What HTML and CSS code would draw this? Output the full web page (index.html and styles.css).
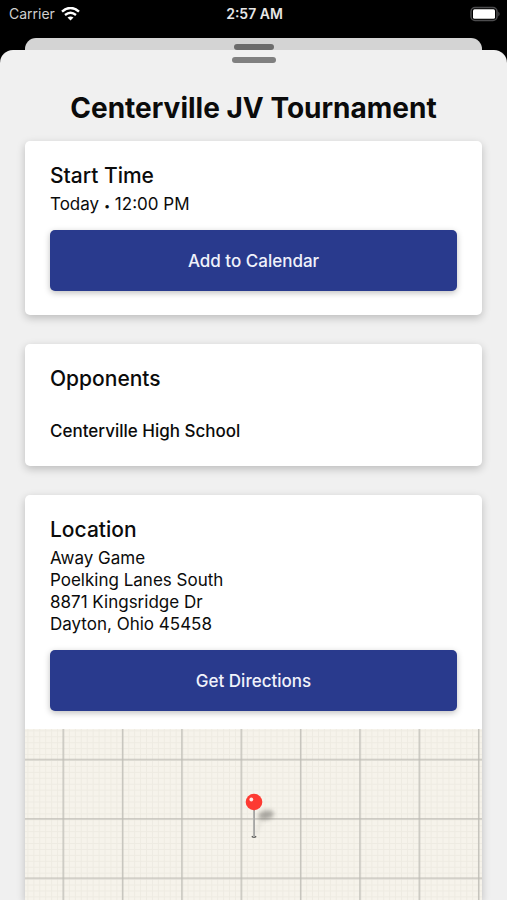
FILE: index.html
```html
<!DOCTYPE html>
<html lang="en">
<head>
<meta charset="utf-8">
<meta name="viewport" content="width=device-width, initial-scale=1">
<title>Centerville JV Tournament</title>
<link rel="stylesheet" href="styles.css">
</head>
<body>
<header class="status">
  <div class="carrier">
    <span>Carrier</span>
    <svg class="wifi" width="19" height="14" viewBox="0 0 19 14" aria-hidden="true">
      <path d="M1 4.600 Q9.500 -2.600 18 4.600" fill="none" stroke="#fff" stroke-width="2.500"/>
      <path d="M4 8 Q9.500 3.400 15 8" fill="none" stroke="#fff" stroke-width="2.300"/>
      <path d="M6.500 10.600 Q9.500 8.200 12.500 10.600 L9.500 13.600 Z" fill="#fff"/>
    </svg>
  </div>
  <time class="clock">2:57 AM</time>
  <svg class="battery" width="31" height="16" viewBox="0 0 31 16" aria-hidden="true">
    <rect x="2" y="1.500" width="26" height="13" rx="4" fill="none" stroke="#4c4c4e" stroke-width="1.500"/>
    <rect x="4" y="3.300" width="22" height="9.400" rx="1.500" fill="#fff"/>
    <path d="M29.300 5.500 Q32 8 29.300 10.500 Z" fill="#4c4c4e"/>
  </svg>
</header>
<div class="back-sheet"><div class="back-handle"></div></div>
<main class="sheet">
  <div class="handle"></div>
  <h1>Centerville JV Tournament</h1>
  <section class="card">
    <h2>Start Time</h2>
    <p>Today <span class="dot">•</span> 12:00 PM</p>
    <button class="action" type="button">Add to Calendar</button>
  </section>
  <section class="card opponents">
    <h2>Opponents</h2>
    <p class="school">Centerville High School</p>
  </section>
  <section class="card location">
    <h2>Location</h2>
    <p>Away Game<br>Poelking Lanes South<br>8871 Kingsridge Dr<br>Dayton, Ohio 45458</p>
    <button class="action" type="button">Get Directions</button>
    <div class="map">
      <svg class="grid" width="100%" height="100%" aria-hidden="true">
        <defs>
          <pattern id="fine" x="38" y="31" width="5.930" height="5.930" patternUnits="userSpaceOnUse">
            <path d="M0 .5H6M.5 0V6" stroke="#eeebe2" stroke-width="1"/>
          </pattern>
          <pattern id="coarse" x="37.500" y="29.700" width="59.350" height="59.350" patternUnits="userSpaceOnUse">
            <path d="M0 .8H60M.8 0V60" stroke="#bebcb5" stroke-width="1.300"/>
          </pattern>
        </defs>
        <rect width="100%" height="100%" fill="#f6f3eb"/>
        <rect width="100%" height="100%" fill="url(#fine)"/>
        <rect width="100%" height="100%" fill="url(#coarse)"/>
      </svg>
      <svg class="pin" width="60" height="56" viewBox="0 0 60 56" role="img" aria-label="Poelking Lanes South">
        <defs>
          <filter id="soft" x="-50%" y="-50%" width="200%" height="200%"><feGaussianBlur stdDeviation="2"/></filter>
          <linearGradient id="needle"><stop offset="0" stop-color="#8d8d8a"/><stop offset=".5" stop-color="#d5d5d2"/><stop offset="1" stop-color="#777"/></linearGradient>
        </defs>
        <ellipse cx="42" cy="26" rx="8" ry="4.500" transform="rotate(-12 42 26)" fill="#77756f" opacity=".6" filter="url(#soft)"/>
        <path d="M31 46L38 30" stroke="#8a8882" stroke-width="1.500" opacity=".3" filter="url(#soft)"/>
        <ellipse cx="30" cy="47.800" rx="2.600" ry="1.100" fill="#62625f"/>
        <rect x="29" y="20" width="2" height="28" fill="url(#needle)"/>
        <circle cx="30" cy="13" r="8.300" fill="#fd3a32"/>
        <circle cx="27.300" cy="10.500" r="1.900" fill="#ffe9e6"/>
      </svg>
    </div>
  </section>
</main>
</body>
</html>
```
FILE: styles.css
```css
* {
  box-sizing: border-box;
}

body {
  margin: 0;
  min-height: 100vh;
  display: flex;
  flex-direction: column;
  background: #000;
  color: #0b0b0b;
  font-family: Inter, "Liberation Sans", sans-serif;
  font-size: 17px;
  line-height: 22px;
}

h1, h2, p {
  margin: 0;
}

.status {
  display: grid;
  grid-template-columns: 1fr auto 1fr;
  align-items: center;
  height: 28px;
  padding: 0 7px 0 9px;
  color: #e6e6e6;
  font-size: 14px;
}

.carrier {
  display: flex;
  align-items: center;
  gap: 6px;
  color: #cfcfcf;
}

.clock {
  font-weight: 600;
}

.battery {
  justify-self: end;
}

.back-sheet {
  margin: 10px 25px 0;
  height: 12px;
  padding-top: 6px;
  background: #d4d4d4;
  border-radius: 11px 11px 0 0;
}

.back-handle {
  width: 40px;
  height: 6px;
  margin: 0 auto;
  border-radius: 3px;
  background: #6c6c6c;
}

.sheet {
  flex: 1;
  display: flex;
  flex-direction: column;
  padding: 7px 25px 0;
  background: #f0f0f0;
  border-radius: 13px 13px 0 0;
}

.handle {
  width: 44px;
  height: 6px;
  margin: 0 auto;
  border-radius: 3px;
  background: #808080;
}

h1 {
  margin: 28px 0 15px;
  text-align: center;
  font-size: 28px;
  line-height: 35px;
  font-weight: 700;
}

.card {
  margin-bottom: 29px;
  padding: 20px 25px 24px;
  background: #fff;
  border-radius: 5px;
  box-shadow: 0 3px 8px rgba(0, 0, 0, .22);
}

h2 {
  margin-bottom: 3px;
  font-size: 21px;
  line-height: 29px;
  font-weight: 500;
}

.dot {
  font-size: 11px;
  line-height: 11px;
}

.action {
  display: block;
  width: 100%;
  height: 61px;
  margin-top: 15px;
  border: 0;
  border-radius: 5px;
  background: #293a8d;
  box-shadow: 0 2px 6px rgba(0, 0, 0, .25);
  color: #f0f2fb;
  font: 500 17px/22px Inter, "Liberation Sans", sans-serif;
}

.school {
  margin-top: 27px;
  font-weight: 500;
}

.location {
  flex: 1;
  display: flex;
  flex-direction: column;
  margin-bottom: 0;
  padding-bottom: 0;
  border-radius: 5px 5px 0 0;
}

.location .action {
  flex: none;
}

.map {
  flex: 1;
  display: grid;
  place-items: start center;
  min-height: 171px;
  margin: 18px -25px 0;
}

.grid, .pin {
  grid-area: 1 / 1;
}

.pin {
  margin-top: 60px;
}
```
